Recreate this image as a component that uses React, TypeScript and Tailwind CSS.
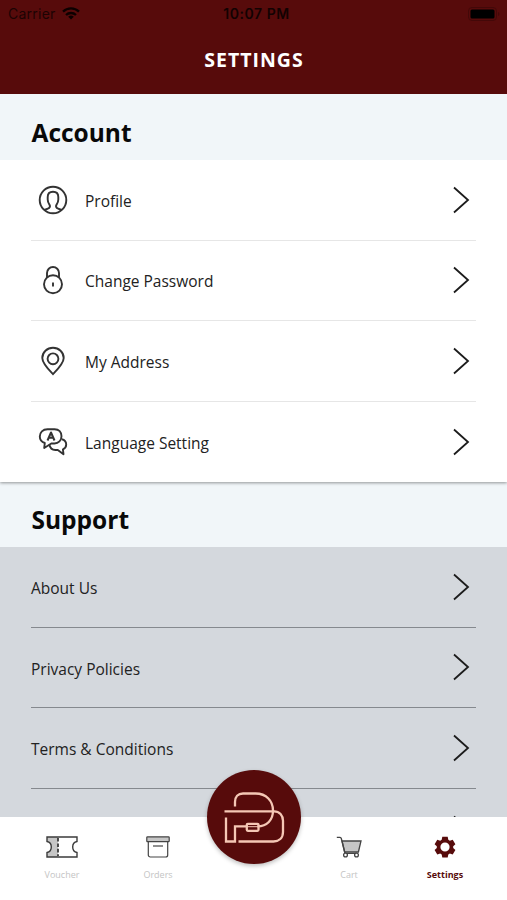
import React from 'react';

const ProfileIcon = () => (
  <svg width="30" height="30" viewBox="0 0 30 30" fill="none" stroke="#333" strokeWidth="1.9">
    <circle cx="15" cy="15" r="13.3" />
    <path d="M6.2 25C9 24 12 23.6 12 21.2c0-1.6-2.3-2.9-2.3-6.7V12c0-3.4 2.3-5.300 5.300-5.300s5.300 1.900 5.300 5.300v2.500c0 3.800-2.300 5.100-2.300 6.700 0 2.400 3 2.800 5.800 3.800" />
  </svg>
);

const LockIcon = () => (
  <svg width="30" height="30" viewBox="0 0 30 30" fill="none" stroke="#333" strokeWidth="1.9">
    <circle cx="15" cy="19.300" r="9" />
    <path d="M9 12.500V8a6 6 0 0 1 12 0v4.500M15 17.500v4" />
  </svg>
);

const PinIcon = () => (
  <svg width="30" height="30" viewBox="0 0 30 30" fill="none" stroke="#333" strokeWidth="1.9">
    <path d="M15 28.200C12 25 4.300 17.500 4.300 12a10.700 10.200 0 0 1 21.400 0c0 5.500-7.700 13-10.700 16.200z" />
    <circle cx="15" cy="12.800" r="5.400" />
  </svg>
);

const LanguageIcon = () => (
  <svg width="30" height="30" viewBox="0 0 30 30" fill="none" stroke="#333" strokeWidth="1.9" strokeLinejoin="round">
    <path d="M9.500 2.300h7c4.500 0 7 2.900 7 7s-3 7.200-7 7.200h-3.200L6.200 21l.6-5C3.700 15 1.800 12.700 1.800 9.500c0-4.200 3-7.200 7.700-7.200z" />
    <path d="M9.500 13.500 13 5.500l3.500 8M10.700 10.700h4.600" strokeWidth="2" />
    <path d="M23.700 12.300c3 .7 4.500 2.700 4.500 5.200 0 2.300-1.300 4.100-3.300 4.900l.6 4.800-5.700-4.200h-2.500c-3 0-5.300-2-6-5.500" />
  </svg>
);

const VoucherIcon = () => (
  <svg width="32" height="22" viewBox="0 0 32 22" fill="none" stroke="#3b3b3b" strokeWidth="1.400">
    <path d="M1 1h11v20H1v-4.500c2.500-.5 4.500-2.700 4.500-5.500S3.500 6 1 5.500z" fill="#c6c6c6" stroke="none" />
    <path d="M1 1h30v4.500C28.500 6 26.700 8.200 26.700 11s1.800 5 4.300 5.500V21H1v-4.500c2.500-.5 4.300-2.700 4.300-5.500S3.500 6 1 5.500z" />
    <path d="M12 2v18" strokeWidth="1.800" strokeDasharray="3.600 1.800" />
  </svg>
);

const OrdersIcon = () => (
  <svg width="24" height="22" viewBox="0 0 24 22" fill="none" stroke="#444" strokeWidth="1.200">
    <path d="M2.300 5.500h19.400V19a2 2 0 0 1-2 2H4.300a2 2 0 0 1-2-2z" />
    <rect x=".8" y=".8" width="22.400" height="4.900" rx=".7" fill="#c6c6c6" />
    <path d="M7 10h10" />
  </svg>
);

const CartIcon = () => (
  <svg width="26" height="22" viewBox="0 0 26 22" fill="none" stroke="#444" strokeWidth="1.300">
    <path d="M6 5h19l-2.600 11H8.600z" fill="#c6c6c6" />
    <path d="M.8 1.300H4q1 0 1.300 1.200L8.700 16q.3 1.300 1.300 1.300h11" />
    <circle cx="9.500" cy="19" r="1.900" fill="#fff" />
    <circle cx="20.500" cy="19" r="1.900" fill="#fff" />
  </svg>
);

const GearIcon = () => (
  <svg width="22" height="22" viewBox="0 0 22 22" fill="#570b0b">
    <path
      fillRule="evenodd"
      d="M8.300.8h5.400l.6 3 1.500.9 2.900-1 2.700 4.600-2.200 2v1.600l2.200 2-2.700 4.600-2.900-1-1.500.9-.6 3H8.300l-.6-3-1.500-.9-2.900 1L.6 13.900l2.200-2v-1.600l-2.200-2 2.700-4.600 2.900 1 1.500-.9zM11 6.400a4.600 4.600 0 1 0 0 9.200 4.600 4.600 0 0 0 0-9.200z"
    />
  </svg>
);

const BrandLogo = () => (
  <svg width="94" height="94" viewBox="0 0 94 94" fill="none" stroke="#f5c7b5" strokeWidth="2.300">
    <path d="M28 36.500V32c0-5 3-8.500 8-8.500h12.500c11 0 17.500 7.500 17.500 17 0 9.500-6 15.800-15.500 15.800" />
    <path d="M17.500 41.300H67c5.500 0 9 4 9 9.500V62c0 6-4 9.500-9.500 9.500h-35" />
    <path d="M19 47.500v24h9V56.300h12" />
    <rect x="39.800" y="53.800" width="11.700" height="7" rx="1" />
    <path d="M40 56.700h11" strokeWidth="1" />
  </svg>
);

const Chevron = () => (
  <svg className="mr-[6px]" width="18" height="28" viewBox="0 0 18 28" fill="none" stroke="#1c1c1c" strokeWidth="1.800">
    <path d="M2 1.500 16 14 2 26.500" />
  </svg>
);

const accountItems = [
  { label: 'Profile', icon: <ProfileIcon /> },
  { label: 'Change Password', icon: <LockIcon /> },
  { label: 'My Address', icon: <PinIcon /> },
  { label: 'Language Setting', icon: <LanguageIcon /> },
];

const supportItems = ['About Us', 'Privacy Policies', 'Terms & Conditions'];

interface TabProps {
  label: string;
  icon: React.ReactNode;
  active?: boolean;
}

const Tab: React.FC<TabProps> = ({ label, icon, active }) => (
  <div className="flex w-[96px] flex-col items-center pt-[19px]">
    <div className="flex h-[22px] items-center">{icon}</div>
    <span
      className={`mt-[11px] text-[9px] leading-[12px] ${active ? 'font-bold text-[#570b0b]' : 'text-[#c4c4c4]'}`}
    >
      {label}
    </span>
  </div>
);

export default function App() {
  return (
    <div className="flex h-[900px] w-[507px] flex-col overflow-hidden bg-white font-['Open_Sans','Noto_Sans',sans-serif] text-[#222]">
      <header className="h-[94px] shrink-0 bg-[#570b0b]">
        {/* Status bar */}
        <div className="grid h-[27px] grid-cols-3 items-center pl-2 pr-[7px] font-['Inter',sans-serif] text-[14px] text-black">
          <div className="flex items-center gap-[6px] text-[#1c0303]">
            <span className="tracking-[0.250px]">Carrier</span>
            <svg width="18" height="13" viewBox="0 0 18 13" fill="none" stroke="#0c0000" strokeWidth="2.300">
              <path d="M1 4.700a11.500 11.500 0 0 1 16 0M4 8a7.300 7.300 0 0 1 10 0" />
              <path d="M9 12.500 6.200 9.800a4 4 0 0 1 5.600 0z" fill="#0c0000" stroke="none" />
            </svg>
          </div>
          <span className="pl-[5px] text-center font-semibold tracking-[0.550px] whitespace-nowrap text-[#120202]">10:07 PM</span>
          <svg className="justify-self-end" width="32" height="14" viewBox="0 0 32 14">
            <rect x=".5" y=".5" width="28" height="13" rx="3.500" fill="none" stroke="#430808" />
            <rect x="2.500" y="2.500" width="24" height="9" rx="1.500" fill="#000" />
            <path d="M30 5v4q1.500-.5 1.500-2T30 5z" fill="#430808" />
          </svg>
        </div>
        <h1 className="mt-[19px] pl-[1px] text-center text-[19.500px] leading-[28px] font-bold tracking-[1px] text-white">SETTINGS</h1>
      </header>

      <main className="flex h-[722.500px] shrink-0 flex-col overflow-hidden">
        <h2 className="z-20 flex h-[66px] shrink-0 items-center bg-[#f1f6f9] pt-[13px] pl-[31.500px] text-[24.500px] font-bold text-[#090909]">
          Account
        </h2>
        <section className="z-10 shrink-0 bg-white px-[31px] shadow-[0_1px_3px_rgba(0,0,0,0.4)]">
          {accountItems.map((item) => (
            <div key={item.label} className="flex h-[80.500px] items-center border-b border-[#e6e6e6] last:border-b-0">
              <span className="ml-[7px] w-[47px]">{item.icon}</span>
              <span className="flex-1 pt-[3.500px] text-[15.500px]">{item.label}</span>
              <Chevron />
            </div>
          ))}
        </section>

        <h2 className="flex h-[65px] shrink-0 items-center bg-[#f1f6f9] pt-[12px] pl-[31.500px] text-[24.500px] font-bold text-[#090909]">
          Support
        </h2>
        <section className="min-h-0 flex-1 bg-[#d4d8dd] px-[31px]">
          {supportItems.map((label) => (
            <div key={label} className="flex h-[80.600px] items-center border-b border-[#85898e]">
              <span className="flex-1 pt-[3.500px] text-[15.500px]">{label}</span>
              <Chevron />
            </div>
          ))}
          {/* Next row, cut off by the tab bar */}
          <div className="flex h-[80.600px] items-center justify-end">
            <Chevron />
          </div>
        </section>
      </main>

      <nav className="relative flex flex-1 justify-between bg-white px-[14px]">
        <div className="flex">
          <Tab label="Voucher" icon={<VoucherIcon />} />
          <Tab label="Orders" icon={<OrdersIcon />} />
        </div>
        <div className="flex">
          <Tab label="Cart" icon={<CartIcon />} />
          <Tab label="Settings" icon={<GearIcon />} active />
        </div>
        {/* Floating home button */}
        <button className="absolute -top-[46.500px] left-[207px] z-20 rounded-full bg-[#570b0b] shadow-[0_2px_4px_rgba(0,0,0,0.25)]">
          <BrandLogo />
        </button>
      </nav>
    </div>
  );
}
